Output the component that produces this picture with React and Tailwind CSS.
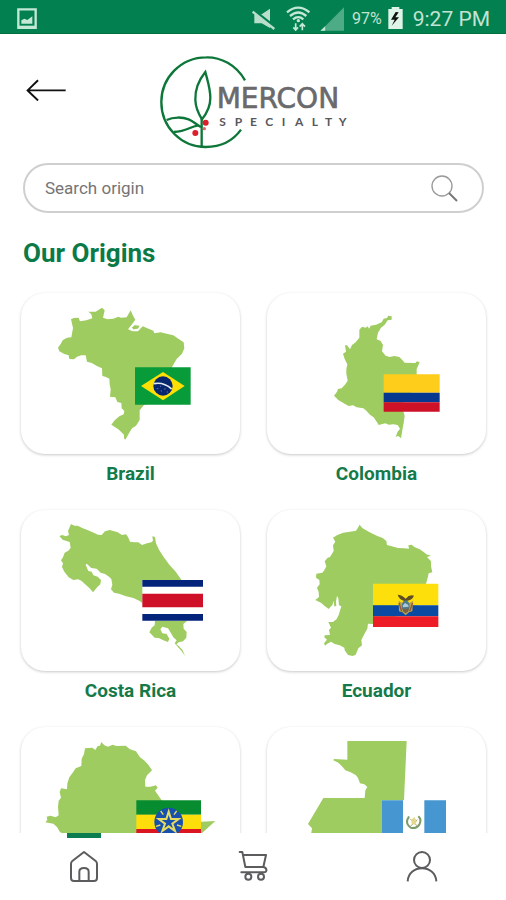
const LEAF = '#9fcc60';

function BrazilMap() {
    return (
        <svg viewBox="33 24 657 483" className="w-full" aria-hidden="true">
            <path
                fill={LEAF}
                d="M183 103L191 99L206 98L210 109L229 106L247 100L244 88L235 80L257 80L276 68L284 76L279 98L292 103L310 101L325 95L333 98L350 97L362 76L368 90L376 104L366 118L354 133L368 139L384 139L398 124L430 137L433 145L452 142L473 147L490 151L506 162L521 172L523 190L516 206L500 222L486 246L478 300L440 350L402 360L389 376L389 405L378 422L366 430L357 445L346 464L342 460L342 449L325 433L304 419L314 406L328 394L341 388L343 378L335 370L334 354L322 351L316 337L300 335L302 313L299 298L298 281L288 276L277 273L276 250L262 244L245 234L231 230L227 211L214 211L201 215L192 223L178 222L176 211L163 207L148 199L144 188L152 177L158 166L171 158L184 157L189 129Z"
            />
            <path d="M364 128L374 119L391 121L385 132L371 135Z" fill={LEAF} stroke="#fff" strokeWidth="3" />
            <path d="M375 247H542V359H375Z" fill="#089b3a" />
            <path d="M459 261L524 303L459 346L393 303Z" fill="#fddf05" />
            <circle cx="459" cy="303" r="29" fill="#08256f" />
            <path d="M432 296Q460 290 485 312" fill="none" stroke="#dfe9ee" strokeWidth="5" />
            <path d="M440 311h5M452 318h4M462 312h5M470 321h4M450 304h3" stroke="#8ca0c8" strokeWidth="2" />
        </svg>
    );
}

function ColombiaMap() {
    return (
        <svg viewBox="33 24 657 483" className="w-full" aria-hidden="true">
            <path
                fill={LEAF}
                d="M310 134L318 125L329 128L335 124L339 131L344 122L360 119L377 112L383 101L393 99L397 92L407 94L407 104L395 106L386 119L375 128L366 143L362 163L374 168L381 180L378 199L389 212L401 216L415 213L430 216L439 225L446 233L478 234L483 229L491 232L482 252V300L430 370L443 382L446 393L443 414L440 430L435 460L427 453L419 455L425 440L432 431L425 420L412 418L398 419L388 415L368 420L363 412L353 397L342 389L331 377L322 370L302 367L291 361L278 363L262 354L247 345L234 332L243 320L246 312L257 310L268 298L275 287L271 266L271 252L274 238L266 222L261 206L270 200L267 181L273 181L282 193L288 180L299 172L310 158Z"
            />
            <path d="M383 268H551V323H383Z" fill="#fecd1c" />
            <path d="M383 323H551V352H383Z" fill="#063890" />
            <path d="M383 352H551V380H383Z" fill="#cd1127" />
        </svg>
    );
}

function CostaRicaMap() {
    return (
        <svg viewBox="33 30 657 483" className="w-full" aria-hidden="true">
            <path
                fill={LEAF}
                d="M148 108L157 105L167 109L177 105L174 93L183 72L193 77L203 77L217 84L232 90L248 97L264 104L275 105L285 94L299 90L313 94L323 97L336 105L348 103L354 111L360 125L373 127L385 127L396 135L411 130L424 127L429 122L427 109L435 111L438 130L447 149L461 171L478 194L496 214L514 239L500 320L400 312L389 303L370 294L348 289L327 281L312 278L303 268L307 254L304 237L297 230L285 222L272 218L260 206L244 204L230 191L227 194L235 213L245 215L250 226L263 230L273 240L271 253L262 261L249 277L239 265L228 255L214 242L204 238L190 240L176 232L163 215L156 201L159 190L153 181L159 172L164 158L175 152L182 143L179 126L158 119Z"
            />
            <path
                fill={LEAF}
                d="M435 362H532L520 372L521 386L530 396L529 413L519 424L506 427L499 433L507 439L518 451L525 468L514 452L503 440L494 430L500 421L490 412L481 396L474 385L457 380L451 388L457 400L470 402L478 416L474 426L460 421L446 414L434 413L418 397L425 383L434 376Z"
            />
            <path d="M397 240H579V362H397Z" fill="#fff" />
            <path d="M397 240H579V260H397ZM397 342H579V362H397Z" fill="#04237a" />
            <path d="M397 281H579V322H397Z" fill="#ce1028" />
        </svg>
    );
}

function EcuadorMap() {
    return (
        <svg viewBox="33 30 657 483" className="w-full" aria-hidden="true">
            <path
                fill={LEAF}
                d="M231 113L244 105L262 98L282 95L300 92L306 83L311 74L319 84L334 93L350 101L364 108L380 114L391 123L393 135L407 139L426 144L444 145L459 146L457 136L467 134L475 141L491 148L504 157L511 163L525 167L513 171L525 184L525 199L529 217L518 220L514 238L510 251L480 330L352 372L336 371L334 386L325 402L316 421L318 436L307 445L299 464L290 468L276 465L266 451L265 443L251 436L236 432L225 425L214 431L207 437L204 430L213 419L205 412L206 406L222 405L219 390L225 383L217 366L231 366L242 357L248 345L256 319L249 316L247 295L243 288L240 304L241 319L235 319L233 302L229 315L218 327L205 317L196 309L178 300L189 291L188 276L183 263L191 253L190 240L180 233L181 221L199 218L205 211L211 199L206 184L215 173L222 171L233 153L231 136L238 125Z"
            />
            <path d="M351 251H547V316H351Z" fill="#fddf0b" />
            <path d="M351 316H547V349H351Z" fill="#0a4aa2" />
            <path d="M351 349H547V381H351Z" fill="#ee1c26" />
            <path d="M425 284Q437 284 449 296Q460 283 474 287Q468 301 454 302L449 307L443 302Q430 299 425 284Z" fill="#5f4d23" />
            <path d="M428 302L440 310L458 310L471 302L469 334L459 337L449 346L439 337L429 334Z" fill="#b5a051" />
            <path d="M429 309L437 334M470 309L461 334" stroke="#a2522c" strokeWidth="4" />
            <ellipse cx="449" cy="318" rx="12" ry="17" fill="#50798a" />
            <path d="M441 316L447 309L457 315L458 320L441 322Z" fill="#aecbd6" />
            <path d="M439 324Q449 331 459 324L456 335L449 340L442 335Z" fill="#756344" />
        </svg>
    );
}

function EthiopiaMap() {
    return (
        <svg viewBox="33 21 657 483" className="w-full" aria-hidden="true">
            <path
                fill={LEAF}
                d="M106 307L112 300L110 290L121 287L137 292L146 286L144 260L146 242L153 233L149 216L153 205L171 208L172 190L178 172L188 158L197 145L214 138L215 116L222 102L225 85L247 83L256 90L263 78L270 77L274 66L283 76L294 80L308 74L319 78L347 77L360 88L378 94L390 112L402 121L415 134L426 151L411 166L405 180L406 200L421 200L438 196L443 203L435 212L442 222L455 241L530 300L574 305L616 303L574 341L520 380L450 390L390 408L330 400L260 405L210 375L175 345L150 337L141 321L130 311Z"
            />
            <path d="M379 241H573V284H379Z" fill="#088c30" />
            <path d="M379 284H573V327H379Z" fill="#fddd0a" />
            <path d="M379 327H573V371H379Z" fill="#dc1620" />
            <circle cx="476" cy="306" r="43" fill="#1750ad" />
            <path
                d="M476 275L483 297L506 297L487 311L495 333L476 319L457 333L465 311L446 297L469 297Z"
                fill="none"
                stroke="#e8dc60"
                strokeWidth="6"
            />
            <path d="M492 284L500 273M460 284L452 273M501 315L514 319M451 315L438 319" stroke="#e8dc60" strokeWidth="4" />
        </svg>
    );
}

function GuatemalaMap() {
    return (
        <svg viewBox="33 21 657 483" className="w-full" aria-hidden="true">
            <path
                fill={LEAF}
                d="M274 63H452L444 241L440 370L400 405L330 412L260 400L200 380L165 345L168 325L156 312L202 234H326L328 211L334 201L325 193L312 190L306 174L300 166L284 157L268 151L258 139L247 128L232 121L234 117L274 119Z"
            />
            <path d="M377 241H570V371H377Z" fill="#fff" />
            <path d="M377 241H441V371H377ZM505 241H570V371H505Z" fill="#4697d1" />
            <path d="M459 289Q444 311 466 324Q482 326 490 314Q498 299 487 289" fill="none" stroke="#7b9d68" strokeWidth="6" />
            <path d="M462 296L484 318M484 299L463 319" stroke="#b5a17b" strokeWidth="3" />
            <path d="M466 300L475 290L482 304L477 314L467 311Z" fill="#e4d78f" />
        </svg>
    );
}

const origins = [
    { name: 'Brazil', Map: BrazilMap },
    { name: 'Colombia', Map: ColombiaMap },
    { name: 'Costa Rica', Map: CostaRicaMap },
    { name: 'Ecuador', Map: EcuadorMap },
    { name: 'Ethiopia', Map: EthiopiaMap },
    { name: 'Guatemala', Map: GuatemalaMap },
];

function StatusBar() {
    return (
        <div className="flex h-[34px] shrink-0 items-center border-b border-[#04703f] bg-[#03804f] pt-1 pr-4 pl-[17px] text-[#c3e3d3]">
            <svg viewBox="51 21 60 64" className="mr-auto w-5" aria-hidden="true">
                <path d="M55 25H107V81H55Z" fill="none" stroke="#c3e8d5" strokeWidth="7" />
                <path d="M55 74H107V82H55Z" fill="#c3e8d5" />
                <path d="M64 68V58L73 53L82 57L97 46V68Z" fill="#c3e8d5" />
            </svg>
            <svg viewBox="-3 15 72 72" className="w-6" aria-hidden="true">
                <path d="M4 37H26L51 20V78L26 64H4Z" fill="#b9dfcc" />
                <path d="M2 25L68 77" stroke="#03804f" strokeWidth="9" />
                <path d="M-1 29L64 81" stroke="#b9dfcc" strokeWidth="7" />
            </svg>
            <svg viewBox="100 13 72 78" className="ml-[10px] w-6" aria-hidden="true">
                <g fill="none" stroke="#c3e8d5" strokeWidth="7">
                    <path d="M103 32Q137 4 170 32" />
                    <path d="M112 43Q137 22 161 43" />
                    <path d="M121 53Q137 40 152 53" />
                </g>
                <circle cx="137" cy="57" r="5" fill="#c3e8d5" />
                <path d="M129 65V84M122 77L129 85L136 77M149 86V67M141 75L149 66L157 75" fill="none" stroke="#c3e8d5" strokeWidth="5" />
            </svg>
            <svg viewBox="203 20 69 69" className="ml-[10px] w-6" aria-hidden="true">
                <path d="M272 21V88H205Z" fill="#4dab85" />
                <path d="M218 75V88H204Z" fill="#c3e8d5" />
            </svg>
            <span className="ml-2 text-base leading-6">97%</span>
            <svg viewBox="402 19 45 67" className="ml-[6px] w-[15px]" aria-hidden="true">
                <path d="M413 19H436V25H446V85H403V25H413Z" fill="#def4e9" />
                <path d="M425 34L411 57H422L413 75L435 50H424L434 35Z" fill="#101010" />
            </svg>
            <time className="ml-[10px] text-[21px] leading-7">9:27 PM</time>
        </div>
    );
}

function Logo() {
    return (
        <svg viewBox="480 45 564 282" className="w-[188px]" role="img" aria-label="Mercon Specialty">
            <g fill="none" stroke="#0d7639" strokeWidth="7">
                <path d="M735 121C708 74 662 51 619 52C542 52 484 114 484 186C484 262 544 321 617 321C662 321 698 304 723 269" />
                <path d="M616 96C590 128 585 153 586 180C587 206 596 222 606 238C622 218 631 201 631 174C631 145 622 120 616 96Z" />
                <path d="M605 236V320" />
                <path d="M500 240C520 230 548 231 566 238C581 244 589 254 603 261C585 247 568 275 521 276" />
            </g>
            <circle cx="617" cy="248" r="9" fill="#dd1f2b" />
            <circle cx="613" cy="266" r="5" fill="#e8606a" />
            <circle cx="586" cy="279" r="9" fill="#dd1f2b" />
            <text x="650" y="205" fill="#6a6a6c" stroke="#6a6a6c" strokeWidth="2" className="font-['DejaVu_Sans'] text-[84px]">
                MERCON
            </text>
            <text
                x="658 704 750 796 845 885 935 975 1016"
                y="257"
                fill="#58585a"
                className="font-['Lato'] text-[36px] font-bold"
            >
                SPECIALTY
            </text>
        </svg>
    );
}

function OriginCard({ name, Map }) {
    return (
        <a href={`#${name.toLowerCase().replace(' ', '-')}`} className="flex flex-col gap-2">
            <div className="overflow-hidden rounded-3xl bg-white shadow-[0_1px_3px_rgba(0,0,0,0.22)]">
                <Map />
            </div>
            <span className="text-center text-[19px] leading-6 font-bold text-[#157a49]">
                {name}
            </span>
        </a>
    );
}

function BottomNav() {
    return (
        <nav className="grid h-[67px] shrink-0 grid-cols-3 bg-white">
            <a href="#home" aria-label="Home" aria-current="page" className="flex flex-col items-center">
                <span className="h-[5px] w-[34px] bg-[#0b7c4f]" />
                <svg viewBox="180 390 90 96" className="mt-3 w-[30px]" fill="none" stroke="#5c5c5e" strokeWidth="6" strokeLinejoin="round" aria-hidden="true">
                    <path d="M225 396L261 424Q264 427 264 432V474Q264 483 255 483H195Q186 483 186 474V432Q186 427 189 424Z" />
                    <path d="M211 483V455Q211 444 225 444Q239 444 239 455V483" />
                </svg>
            </a>
            <a href="#cart" aria-label="Cart" className="flex flex-col items-center pt-[17px]">
                <svg viewBox="-3 -3 90 96" className="w-[30px]" fill="none" stroke="#5c5c5e" strokeWidth="6" strokeLinejoin="round" strokeLinecap="round" aria-hidden="true">
                    <path d="M2 3H10L19 48H73L81 12H13" />
                    <path d="M73 48C85 50 85 64 75 64H7" />
                    <circle cx="28" cy="77" r="9" />
                    <circle cx="66" cy="77" r="9" />
                </svg>
            </a>
            <a href="#account" aria-label="Account" className="flex flex-col items-center pt-[17px]">
                <svg viewBox="450 390 96 96" className="w-8" fill="none" stroke="#5c5c5e" strokeWidth="6" aria-hidden="true">
                    <circle cx="498" cy="420" r="24" />
                    <path d="M455 484C458 432 538 432 541 484" />
                </svg>
            </a>
        </nav>
    );
}

export default function App() {
    return (
        <div className="flex h-screen flex-col bg-white font-['Roboto',sans-serif]">
            <StatusBar />
            <header className="grid h-[129px] shrink-0 grid-cols-[1fr_auto_1fr] items-start pt-[21px] pr-6 pl-[26px]">
                <button type="button" aria-label="Back" className="mt-6 justify-self-start">
                    <svg viewBox="75 118 123 69" className="w-10" fill="none" stroke="#111" strokeWidth="6" aria-hidden="true">
                        <path d="M197 153H80M112 122L80 153L112 184" />
                    </svg>
                </button>
                <Logo />
            </header>

            <main className="min-h-0 flex-1 overflow-y-auto [scrollbar-width:none]">
                <form role="search" className="mr-[22px] ml-[23px] flex h-[50px] items-center rounded-full border-2 border-[#cfcfcf] pr-6 pl-5">
                    <input
                        type="search"
                        aria-label="Search origin"
                        placeholder="Search origin"
                        className="min-w-0 flex-1 text-[17px] leading-6 text-[#555] outline-none placeholder:text-[#747474]"
                    />
                    <button type="submit" aria-label="Search">
                        <svg viewBox="1293 71 81 81" className="w-[27px]" fill="none" aria-hidden="true">
                            <circle cx="1326" cy="104" r="30" stroke="#999" strokeWidth="4" />
                            <path d="M1347 125L1371 149" stroke="#777" strokeWidth="6" />
                        </svg>
                    </button>
                </form>

                <h1 className="mx-[23px] mt-6 text-[26px] leading-8 font-bold text-[#0b7a47]">
                    Our Origins
                </h1>

                <div className="mt-6 mr-5 ml-[21px] grid grid-cols-2 gap-x-[27px] gap-y-6 pb-6">
                    {origins.map((origin) => (
                        <OriginCard key={origin.name} {...origin} />
                    ))}
                </div>
            </main>

            <BottomNav />
        </div>
    );
}
